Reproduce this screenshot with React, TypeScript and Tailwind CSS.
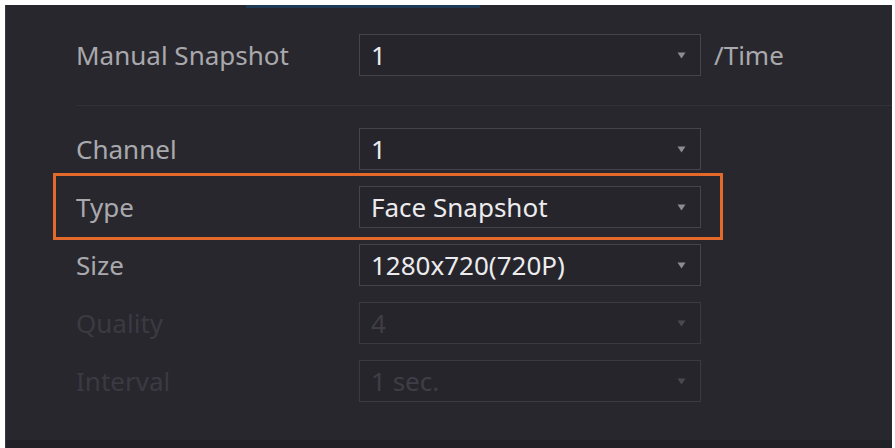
import React from 'react';

type Row = { label: string; value: string; disabled?: boolean; highlight?: boolean };

const ROWS: Row[] = [
  { label: 'Channel', value: '1' },
  { label: 'Type', value: 'Face Snapshot', highlight: true },
  { label: 'Size', value: '1280x720(720P)' },
  { label: 'Quality', value: '4', disabled: true },
  { label: 'Interval', value: '1 sec.', disabled: true },
];

function Arrow({ dim }: { dim?: boolean }) {
  return (
    <svg width="9" height="7" viewBox="0 0 9 7" className="shrink-0">
      <path d="M0.5 0.5 L8.5 0.5 L4.5 6.5 Z" fill={dim ? '#4a4952' : '#8d8c93'} />
    </svg>
  );
}

function Select({ value, disabled }: { value: string; disabled?: boolean }) {
  return (
    <div
      className={`w-[342px] h-[42px] flex items-center justify-between pl-[11px] pr-[14px] border ${
        disabled ? 'border-[#3b3a43] text-[#3f3e47]' : 'border-[#45444b] text-[#ececee]'
      } bg-[#26252b]`}
    >
      <span>{value}</span>
      <Arrow dim={disabled} />
    </div>
  );
}

export default function App() {
  return (
    <div className="w-[895px] h-[448px] bg-white pt-[5px] pl-[5px] pr-[3px] overflow-hidden font-['Noto_Sans',sans-serif] text-[26px] leading-none">
      <div className="relative h-full bg-[#28272d] border-l border-[#3a393f] flex flex-col">
        {/* active tab underline */}
        <div className="absolute top-0 left-[240px] w-[234px] h-[3px] bg-[#1e3a55]" />

        <div className="flex items-center pl-[70px] pt-[29px]">
          <span className="w-[283px] text-[#a9a9ad]">Manual Snapshot</span>
          <Select value="1" />
          <span className="ml-[13px] text-[#a9a9ad]">/Time</span>
        </div>

        <div className="ml-[70px] mt-[29px] h-px bg-[#323137]" />

        <div className="flex flex-col gap-4 pl-[70px] pt-[22px]">
          {ROWS.map((r) => (
            <div key={r.label} className="relative flex items-center">
              {r.highlight && (
                <div className="absolute -left-[23px] -top-[13px] w-[670px] h-[67px] border-[3px] border-[#e3692b]" />
              )}
              <span className={`w-[283px] ${r.disabled ? 'text-[#3b3a43]' : 'text-[#a9a9ad]'}`}>{r.label}</span>
              <Select value={r.value} disabled={r.disabled} />
            </div>
          ))}
        </div>

        <div className="mt-auto h-[8px] bg-[#222127]" />
      </div>
    </div>
  );
}
